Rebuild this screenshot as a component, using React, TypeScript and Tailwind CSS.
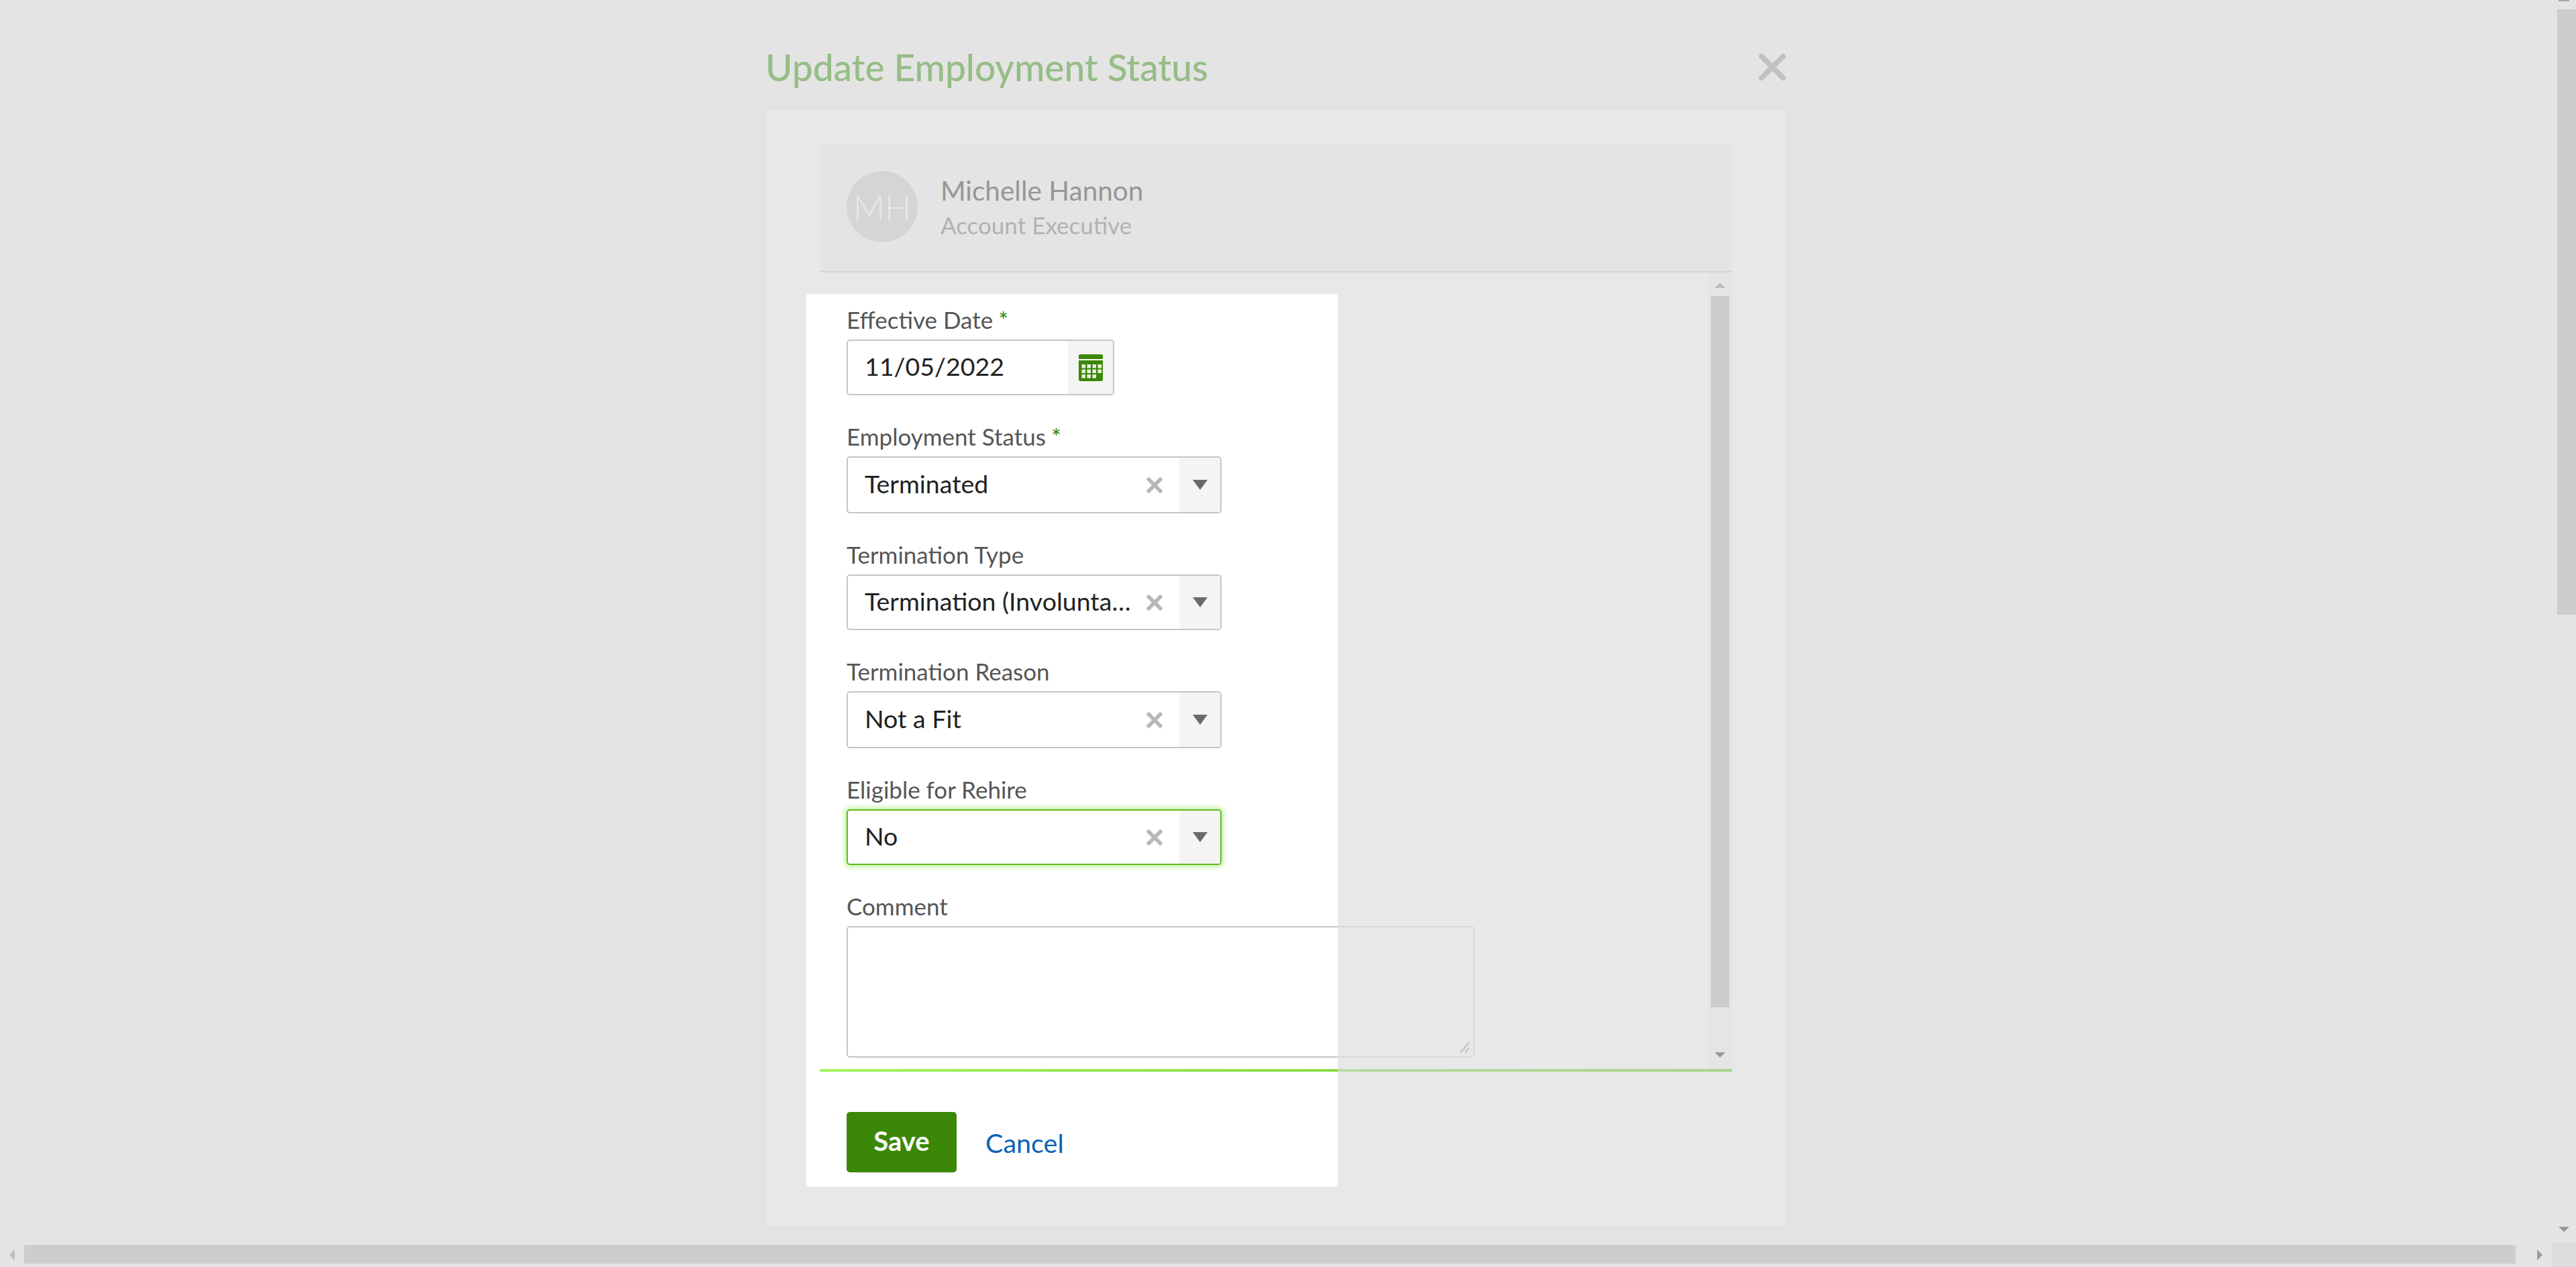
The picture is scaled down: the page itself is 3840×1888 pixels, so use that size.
import React from "react";

function Caret({ fill = "#6a6a6a" }: { fill?: string }) {
  return (
    <svg width="22" height="15" viewBox="0 0 22 15" className="block">
      <polygon points="0,0 22,0 11,15" fill={fill} />
    </svg>
  );
}

function Clear() {
  return (
    <svg width="26" height="26" viewBox="0 0 26 26" className="block">
      <path d="M2.5 2.5 L23.5 23.5 M23.5 2.5 L2.5 23.5" stroke="#b7b7b7" strokeWidth="5.5" strokeLinecap="butt" fill="none" />
    </svg>
  );
}

function Calendar() {
  const cells: [number, number][] = [];
  [15, 22.5, 30].forEach((y, r) => {
    [4.5, 12.5, 20.5, 28.5].forEach((x, c) => {
      if (!(r === 2 && c === 3)) cells.push([x, y]);
    });
  });
  return (
    <svg width="36" height="40" viewBox="0 0 36 40" className="block">
      <path d="M2 0 H34 A2 2 0 0 1 36 2 V7 H0 V2 A2 2 0 0 1 2 0 Z" fill="#3b8707" />
      <path d="M0 9 H36 V37 A3 3 0 0 1 33 40 H3 A3 3 0 0 1 0 37 Z" fill="#3b8707" />
      {cells.map(([x, y]) => (
        <rect key={`${x}-${y}`} x={x} y={y} width="5.5" height="5.5" fill="#e8f0e0" />
      ))}
    </svg>
  );
}

function Label({ text, required }: { text: string; required?: boolean }) {
  return (
    <div className="h-[48px] text-[35px] leading-[37px] text-[#555555]">
      {text}
      {required && <span className="ml-[8px] text-[#3b8707]">*</span>}
    </div>
  );
}

function SelectField({
  label,
  value,
  required,
  focused,
  heightClass,
}: {
  label: string;
  value: string;
  required?: boolean;
  focused?: boolean;
  heightClass: string;
}) {
  return (
    <div>
      <Label text={label} required={required} />
      <div
        className={
          focused
            ? `flex w-[559px] ${heightClass} overflow-hidden rounded-[5px] border-2 border-[#62b82b] bg-white shadow-[0_0_7px_3px_rgba(150,235,90,0.6)]`
            : `flex w-[559px] ${heightClass} overflow-hidden rounded-[5px] border-2 border-[#c6c6c6] bg-white`
        }
      >
        <div className="flex min-w-0 flex-1 items-center pl-[25px] pr-[20px]">
          <span className="mb-[3px] w-[400px] truncate text-[37.5px] leading-[48px] text-[#222222]">{value}</span>
          <span className="ml-[19px] shrink-0">
            <Clear />
          </span>
        </div>
        <div className="flex w-[61px] shrink-0 items-center justify-center bg-[#f4f4f4]">
          <Caret />
        </div>
      </div>
    </div>
  );
}

export default function App() {
  return (
    <div className="flex h-[1888px] w-[3840px] flex-col overflow-hidden bg-[#e4e4e4] font-['Lato',sans-serif]">
      <div className="flex h-[1852px]">
        <main className="flex-1 pl-[1141px]">
          <div className="w-[1521px]">
            <div className="flex h-[164px] items-start justify-between pt-[70px]">
              <h1 className="text-[55px] font-medium leading-[60px] text-[#96bd86]">Update Employment Status</h1>
              <svg width="40" height="40" viewBox="0 0 40 40" className="mt-[10px] block">
                <path d="M4 4 L36 36 M36 4 L4 36" stroke="#c1c1c1" strokeWidth="8" strokeLinecap="round" fill="none" />
              </svg>
            </div>

            <div className="relative h-[1664px] rounded-[4px] bg-[#e8e8e8] pl-[81px] pt-[51px] shadow-[0_0_30px_rgba(0,0,0,0.025)]">
              <div className="absolute left-[61px] top-[274px] h-[1330px] w-[792px] bg-white" />

              <div className="relative w-[1360px]">
                <header className="flex h-[191px] items-center border-b-2 border-[#d5d5d5] bg-[#e4e4e4] pb-[3px] pl-[40px]">
                  <div className="flex h-[106px] w-[106px] items-center justify-center rounded-full bg-[#d5d5d5] text-[52px] font-light text-[#e9e9e9]">
                    MH
                  </div>
                  <div className="ml-[34px] pt-[3px]">
                    <div className="text-[40.5px] leading-[50px] text-[#969696]">Michelle Hannon</div>
                    <div className="text-[35px] leading-[52px] text-[#b2b2b2]">Account Executive</div>
                  </div>
                </header>

                <div className="flex h-[1187px]">
                  <div className="flex min-w-0 flex-1 flex-col gap-[43px] pl-[40px] pt-[52px]">
                    <div>
                      <Label text="Effective Date" required />
                      <div className="flex h-[83px] w-[399px] overflow-hidden rounded-[5px] border-2 border-[#c6c6c6] bg-white">
                        <div className="flex flex-1 items-center pb-[3px] pl-[25px] text-[37.5px] text-[#222222]">11/05/2022</div>
                        <div className="flex w-[67px] items-center justify-center bg-[#f4f4f4]">
                          <Calendar />
                        </div>
                      </div>
                    </div>
                    <SelectField label="Employment Status" value="Terminated" required heightClass="h-[85px]" />
                    <SelectField label="Termination Type" value="Termination (Involuntary)" heightClass="h-[83px]" />
                    <SelectField label="Termination Reason" value="Not a Fit" heightClass="h-[85px]" />
                    <SelectField label="Eligible for Rehire" value="No" focused heightClass="h-[83px]" />
                    <div>
                      <Label text="Comment" />
                      <div className="relative h-[196px] w-[936px]">
                        <textarea
                          readOnly
                          className="block h-full w-full resize-none rounded-[5px] border-2 border-[#c6c6c6] bg-transparent outline-none"
                        />
                        <svg width="16" height="18" viewBox="0 0 16 18" className="absolute bottom-[6px] right-[6px]">
                          <path d="M1 17 L14 1 M8 17 L14 9" stroke="#8c8c8c" strokeWidth="2" fill="none" />
                        </svg>
                        <div className="absolute -right-px bottom-0 left-[732px] top-0 bg-[#e8e8e8]/55" />
                      </div>
                    </div>
                  </div>

                  <div className="flex w-[36px] shrink-0 flex-col items-center bg-[#e5e5e5]">
                    <svg width="16" height="8" viewBox="0 0 16 8" className="mt-[15px] block">
                      <polygon points="8,0 16,8 0,8" fill="#bdbdbd" />
                    </svg>
                    <div className="mt-[12px] h-[1060px] w-[28px] bg-[#cdcdcd]" />
                    <svg width="16" height="8" viewBox="0 0 16 8" className="mt-[67px] block">
                      <polygon points="0,0 16,0 8,8" fill="#9a9a9a" />
                    </svg>
                  </div>
                </div>

                <div className="flex h-[4px]">
                  <div className="w-[772px] bg-gradient-to-r from-[#a6f25e] to-[#88dc44]" />
                  <div className="flex-1 bg-gradient-to-r from-[#b9dba1] to-[#a8d38d]" />
                </div>

                <div className="flex items-start pl-[40px] pt-[60px]">
                  <button className="h-[90px] w-[164px] rounded-[5px] bg-[#3b8707] pb-[4px] text-[40px] font-bold text-white">
                    Save
                  </button>
                  <a className="ml-[43px] mt-[1px] text-[39.5px] leading-[90px] text-[#0b62b8]">Cancel</a>
                </div>
              </div>
            </div>
          </div>
        </main>

        <aside className="flex w-[36px] shrink-0 flex-col items-center">
          <svg width="16" height="2" viewBox="0 0 16 2" className="block">
            <rect width="16" height="2" fill="#a5a5a5" />
          </svg>
          <div className="ml-[8px] mt-[12px] h-[902px] w-[28px] bg-[#cdcdcd]" />
          <svg width="16" height="8" viewBox="0 0 16 8" className="ml-[0px] mt-[912px] block">
            <polygon points="0,0 16,0 8,8" fill="#9a9a9a" />
          </svg>
        </aside>
      </div>

      <div className="flex h-[36px] items-center">
        <svg width="8" height="16" viewBox="0 0 8 16" className="ml-[14px] block">
          <polygon points="8,0 8,16 0,8" fill="#bdbdbd" />
        </svg>
        <div className="ml-[14px] mt-[-2px] h-[28px] w-[3714px] bg-[#cdcdcd]" />
        <svg width="8" height="16" viewBox="0 0 8 16" className="ml-[32px] block">
          <polygon points="0,0 8,8 0,16" fill="#9a9a9a" />
        </svg>
        <div className="ml-[14px] h-[36px] w-[36px] bg-[#dcdcdc]" />
      </div>
    </div>
  );
}
